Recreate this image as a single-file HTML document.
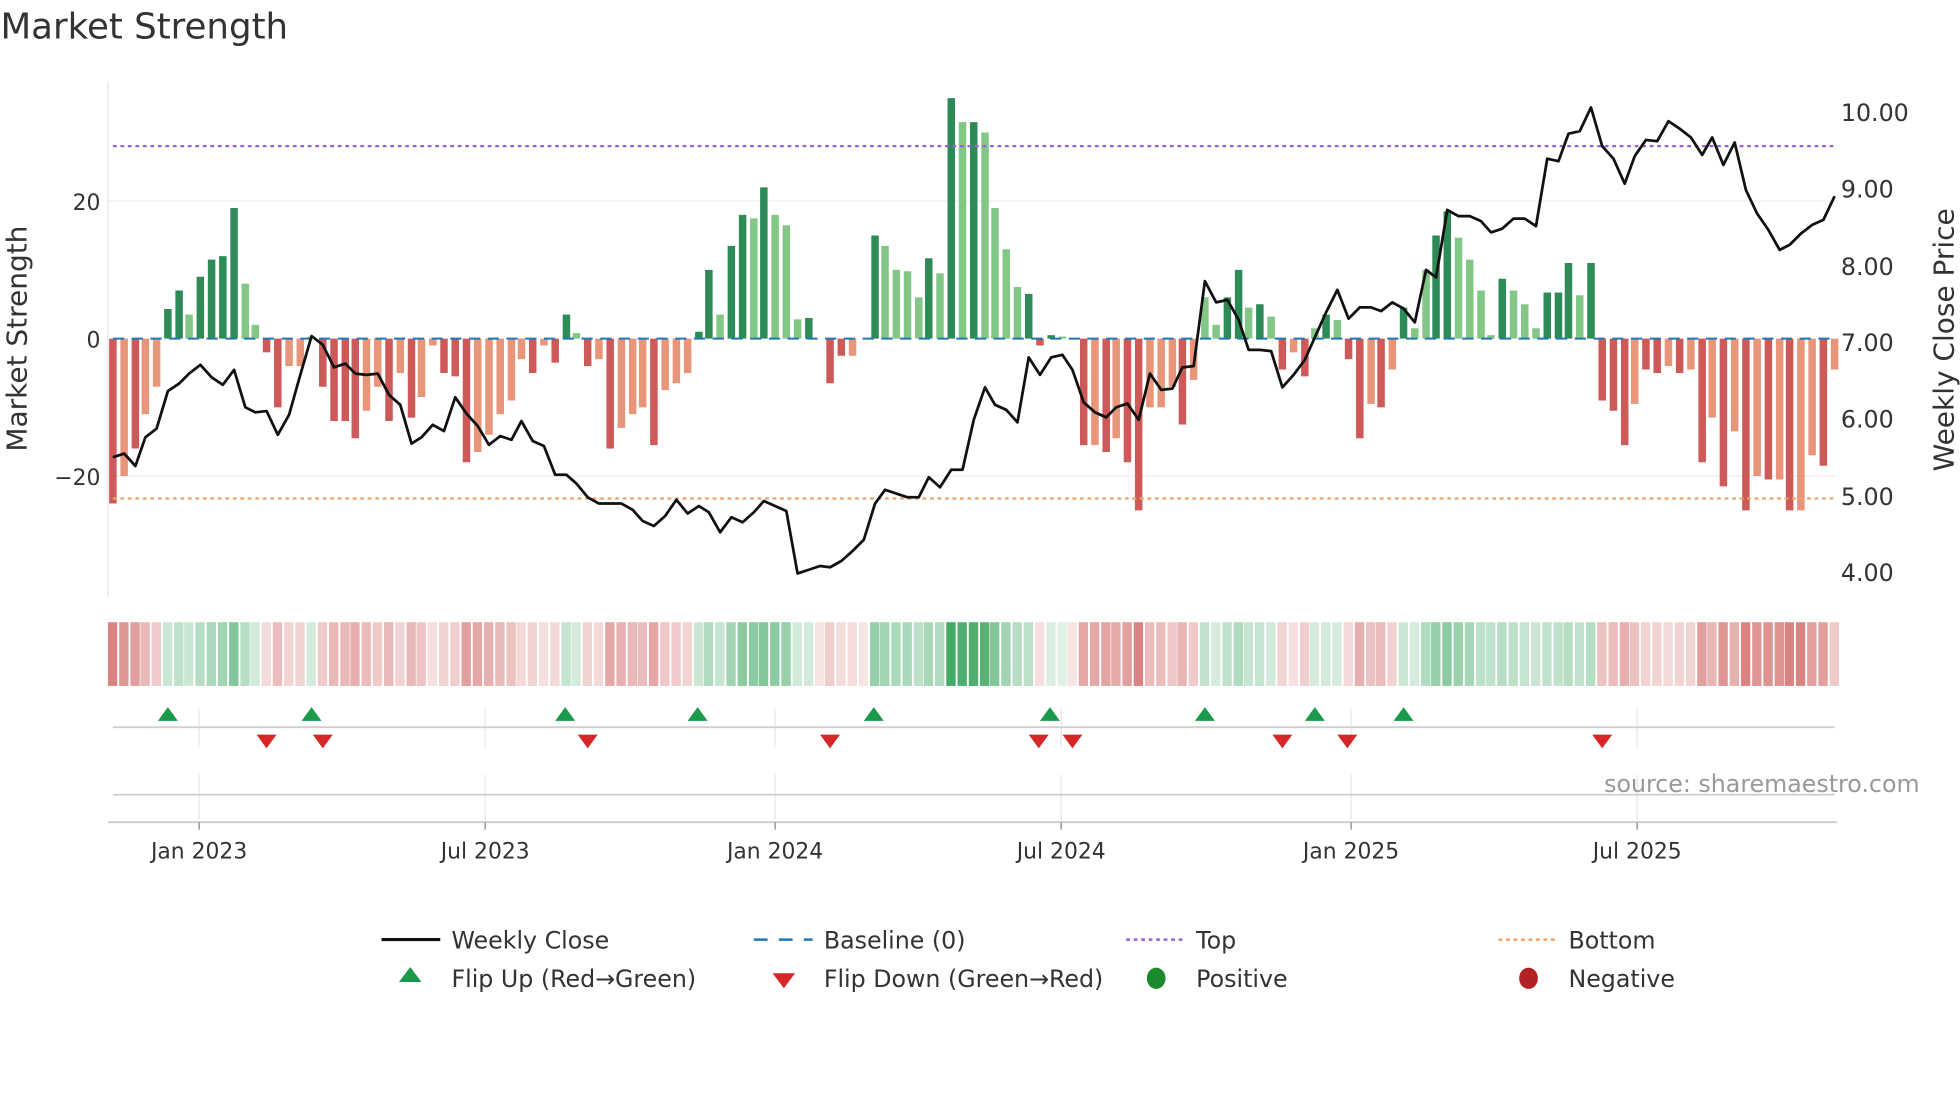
<!DOCTYPE html>
<html><head><meta charset="utf-8"><style>
html,body{margin:0;padding:0;background:#fff;}
svg{display:block;font-family:"DejaVu Sans","Liberation Sans",sans-serif;}
.a{stroke:#cd5a58}.b{stroke:#e8957a}.c{stroke:#2e8b57}.e{stroke:#82c785}
.r{fill:#c9504d}.g{fill:#2ea055}
</style></head><body>
<svg width="1960" height="1102" viewBox="0 0 1568 882" xmlns="http://www.w3.org/2000/svg">
<text x="0" y="31" font-size="28.5" fill="#333">Market Strength</text>
<line x1="86" y1="65" x2="86" y2="478" stroke="#e5e5e5"/>
<line x1="86" y1="161" x2="1470" y2="161" stroke="#eee"/>
<line x1="86" y1="381" x2="1470" y2="381" stroke="#eee"/>
<g font-size="17.5" fill="#333">
<text x="80" y="168" text-anchor="end">20</text>
<text x="80" y="278" text-anchor="end">0</text>
<text x="80" y="388" text-anchor="end">−20</text>
</g>
<g font-size="19" fill="#333">
<text x="1473" y="97">10.00</text>
<text x="1473" y="158">9.00</text>
<text x="1473" y="220">8.00</text>
<text x="1473" y="281">7.00</text>
<text x="1473" y="342">6.00</text>
<text x="1473" y="404">5.00</text>
<text x="1473" y="465">4.00</text>
</g>
<text transform="translate(21,271) rotate(-90)" font-size="22.4" fill="#333" text-anchor="middle">Market Strength</text>
<text transform="translate(1563,272) rotate(-90)" font-size="22.4" fill="#333" text-anchor="middle">Weekly Close Price</text>
<g transform="translate(0,271) scale(1,-5.5)" stroke-width="6">
<line class="a" x1="90" x2="90" y2="-24"/><line class="b" x1="99" x2="99" y2="-20"/><line class="a" x1="108" x2="108" y2="-16"/><line class="b" x1="116" x2="116" y2="-11"/><line class="b" x1="125" x2="125" y2="-7"/>
<line class="c" x1="134" x2="134" y2="4.3"/><line class="c" x1="143" x2="143" y2="7"/><line class="e" x1="151" x2="151" y2="3.5"/><line class="c" x1="160" x2="160" y2="9"/><line class="c" x1="169" x2="169" y2="11.5"/><line class="c" x1="178" x2="178" y2="12"/><line class="c" x1="187" x2="187" y2="19"/><line class="e" x1="196" x2="196" y2="8"/><line class="e" x1="204" x2="204" y2="2"/>
<line class="a" x1="213" x2="213" y2="-2"/><line class="a" x1="222" x2="222" y2="-10"/><line class="b" x1="231" x2="231" y2="-4"/><line class="b" x1="240" x2="240" y2="-4"/><line class="e" x1="249" x2="249" y2="0.3"/>
<line class="a" x1="258" x2="258" y2="-7"/><line class="a" x1="267" x2="267" y2="-12"/><line class="a" x1="276" x2="276" y2="-12"/><line class="a" x1="284" x2="284" y2="-14.5"/><line class="b" x1="293" x2="293" y2="-10.5"/><line class="b" x1="302" x2="302" y2="-7"/><line class="a" x1="311" x2="311" y2="-12"/><line class="b" x1="320" x2="320" y2="-5"/><line class="a" x1="329" x2="329" y2="-11.5"/><line class="b" x1="337" x2="337" y2="-8.5"/><line class="b" x1="346" x2="346" y2="-1"/><line class="a" x1="355" x2="355" y2="-5"/><line class="a" x1="364" x2="364" y2="-5.5"/><line class="a" x1="373" x2="373" y2="-18"/><line class="b" x1="382" x2="382" y2="-16.5"/><line class="b" x1="391" x2="391" y2="-14"/><line class="b" x1="400" x2="400" y2="-11"/><line class="b" x1="409" x2="409" y2="-9"/><line class="b" x1="417" x2="417" y2="-3"/><line class="a" x1="426" x2="426" y2="-5"/><line class="b" x1="435" x2="435" y2="-1"/><line class="a" x1="444" x2="444" y2="-3.5"/>
<line class="c" x1="453" x2="453" y2="3.5"/><line class="e" x1="461" x2="461" y2="0.8"/>
<line class="a" x1="470" x2="470" y2="-4"/><line class="b" x1="479" x2="479" y2="-3"/><line class="a" x1="488" x2="488" y2="-16"/><line class="b" x1="497" x2="497" y2="-13"/><line class="b" x1="506" x2="506" y2="-11"/><line class="b" x1="514" x2="514" y2="-10"/><line class="a" x1="523" x2="523" y2="-15.5"/><line class="b" x1="532" x2="532" y2="-7.5"/><line class="b" x1="541" x2="541" y2="-6.5"/><line class="b" x1="550" x2="550" y2="-5"/>
<line class="c" x1="559" x2="559" y2="1"/><line class="c" x1="567" x2="567" y2="10"/><line class="e" x1="576" x2="576" y2="3.5"/><line class="c" x1="585" x2="585" y2="13.5"/><line class="c" x1="594" x2="594" y2="18"/><line class="e" x1="603" x2="603" y2="17.5"/><line class="c" x1="611" x2="611" y2="22"/><line class="e" x1="620" x2="620" y2="18"/><line class="e" x1="629" x2="629" y2="16.5"/><line class="e" x1="638" x2="638" y2="2.8"/><line class="c" x1="647" x2="647" y2="3"/>
<line class="a" x1="664" x2="664" y2="-6.5"/><line class="a" x1="673" x2="673" y2="-2.5"/><line class="b" x1="682" x2="682" y2="-2.5"/>
<line class="c" x1="700" x2="700" y2="15"/><line class="e" x1="708" x2="708" y2="13.5"/><line class="e" x1="717" x2="717" y2="10"/><line class="e" x1="726" x2="726" y2="9.8"/><line class="e" x1="735" x2="735" y2="6"/><line class="c" x1="743" x2="743" y2="11.7"/><line class="e" x1="752" x2="752" y2="9.5"/><line class="c" x1="761" x2="761" y2="35"/><line class="e" x1="770" x2="770" y2="31.5"/><line class="c" x1="779" x2="779" y2="31.5"/><line class="e" x1="788" x2="788" y2="30"/><line class="e" x1="796" x2="796" y2="19"/><line class="e" x1="805" x2="805" y2="13"/><line class="e" x1="814" x2="814" y2="7.5"/><line class="c" x1="823" x2="823" y2="6.5"/>
<line class="a" x1="832" x2="832" y2="-1"/><line class="c" x1="841" x2="841" y2="0.5"/><line class="e" x1="850" x2="850" y2="0.3"/>
<line class="a" x1="867" x2="867" y2="-15.5"/><line class="b" x1="876" x2="876" y2="-15.5"/><line class="a" x1="885" x2="885" y2="-16.5"/><line class="b" x1="893" x2="893" y2="-14.5"/><line class="a" x1="902" x2="902" y2="-18"/><line class="a" x1="911" x2="911" y2="-25"/><line class="b" x1="920" x2="920" y2="-10"/><line class="b" x1="929" x2="929" y2="-10"/><line class="b" x1="938" x2="938" y2="-7"/><line class="a" x1="946" x2="946" y2="-12.5"/><line class="b" x1="955" x2="955" y2="-6"/>
<line class="e" x1="964" x2="964" y2="6"/><line class="e" x1="973" x2="973" y2="2"/><line class="c" x1="982" x2="982" y2="6"/><line class="c" x1="991" x2="991" y2="10"/><line class="e" x1="999" x2="999" y2="4.5"/><line class="c" x1="1008" x2="1008" y2="5"/><line class="e" x1="1017" x2="1017" y2="3.2"/>
<line class="a" x1="1026" x2="1026" y2="-4.5"/><line class="b" x1="1035" x2="1035" y2="-2"/><line class="a" x1="1044" x2="1044" y2="-5.5"/>
<line class="e" x1="1052" x2="1052" y2="1.5"/><line class="c" x1="1061" x2="1061" y2="3.5"/><line class="e" x1="1070" x2="1070" y2="2.7"/>
<line class="a" x1="1079" x2="1079" y2="-3"/><line class="a" x1="1088" x2="1088" y2="-14.5"/><line class="b" x1="1097" x2="1097" y2="-9.5"/><line class="a" x1="1105" x2="1105" y2="-10"/><line class="b" x1="1114" x2="1114" y2="-4.5"/>
<line class="c" x1="1123" x2="1123" y2="4.5"/><line class="e" x1="1132" x2="1132" y2="1.5"/><line class="e" x1="1141" x2="1141" y2="10"/><line class="c" x1="1149" x2="1149" y2="15"/><line class="c" x1="1158" x2="1158" y2="18.5"/><line class="e" x1="1167" x2="1167" y2="14.7"/><line class="e" x1="1176" x2="1176" y2="11.5"/><line class="e" x1="1185" x2="1185" y2="7"/><line class="e" x1="1193" x2="1193" y2="0.5"/><line class="c" x1="1202" x2="1202" y2="8.7"/><line class="e" x1="1211" x2="1211" y2="7"/><line class="e" x1="1220" x2="1220" y2="5"/><line class="e" x1="1229" x2="1229" y2="1.5"/><line class="c" x1="1238" x2="1238" y2="6.7"/><line class="c" x1="1247" x2="1247" y2="6.7"/><line class="c" x1="1255" x2="1255" y2="11"/><line class="e" x1="1264" x2="1264" y2="6.3"/><line class="c" x1="1273" x2="1273" y2="11"/>
<line class="a" x1="1282" x2="1282" y2="-9"/><line class="a" x1="1291" x2="1291" y2="-10.5"/><line class="a" x1="1300" x2="1300" y2="-15.5"/><line class="b" x1="1308" x2="1308" y2="-9.5"/><line class="a" x1="1317" x2="1317" y2="-4.5"/><line class="a" x1="1326" x2="1326" y2="-5"/><line class="b" x1="1335" x2="1335" y2="-4"/><line class="a" x1="1344" x2="1344" y2="-5"/><line class="b" x1="1353" x2="1353" y2="-4.5"/><line class="a" x1="1362" x2="1362" y2="-18"/><line class="b" x1="1370" x2="1370" y2="-11.5"/><line class="a" x1="1379" x2="1379" y2="-21.5"/><line class="b" x1="1388" x2="1388" y2="-13.5"/><line class="a" x1="1397" x2="1397" y2="-25"/><line class="b" x1="1406" x2="1406" y2="-20"/><line class="a" x1="1415" x2="1415" y2="-20.5"/><line class="b" x1="1424" x2="1424" y2="-20.5"/><line class="a" x1="1432" x2="1432" y2="-25"/><line class="b" x1="1441" x2="1441" y2="-25"/><line class="b" x1="1450" x2="1450" y2="-17"/><line class="a" x1="1459" x2="1459" y2="-18.5"/><line class="b" x1="1468" x2="1468" y2="-4.5"/>
</g>
<line x1="90" y1="271" x2="1468" y2="271" stroke="#1f77b4" stroke-width="1.6" stroke-dasharray="9,6"/>
<line x1="90" y1="117" x2="1468" y2="117" stroke="#9b5fe0" stroke-width="1.8" stroke-dasharray="3,3"/>
<line x1="90" y1="399" x2="1468" y2="399" stroke="#f4a060" stroke-width="1.8" stroke-dasharray="3,3"/>
<polyline fill="none" stroke="#111" stroke-width="2.2" stroke-linejoin="round" points="90,366 99,363 108,373 116,350 125,343 134,313 143,307 151,299 160,292 169,302 178,308 187,296 196,326 204,330 213,329 222,348 231,332 240,300 249,269 258,276 267,294 276,291 284,299 293,300 302,299 311,316 320,324 329,355 337,350 346,340 355,345 364,318 373,331 382,341 391,356 400,349 409,352 417,337 426,353 435,357 444,380 453,380 461,387 470,398 479,403 488,403 497,403 506,408 514,417 523,421 532,413 541,400 550,411 559,405 567,410 576,426 585,414 594,418 603,410 611,401 620,405 629,409 638,459 647,456 656,453 664,454 673,449 682,441 691,432 700,403 708,392 717,395 726,398 735,398 743,382 752,390 761,376 770,376 779,336 788,310 796,324 805,328 814,338 823,286 832,300 841,286 850,284 858,296 867,322 876,330 885,334 893,326 902,323 911,336 920,299 929,312 938,311 946,294 955,293 964,225 973,242 982,240 991,256 999,280 1008,280 1017,281 1026,310 1035,300 1044,288 1052,270 1061,250 1070,232 1079,255 1088,246 1097,246 1105,249 1114,242 1123,247 1132,258 1141,216 1149,222 1158,168 1167,173 1176,173 1185,177 1193,186 1202,183 1211,175 1220,175 1229,181 1238,127 1247,129 1255,107 1264,105 1273,86 1282,117 1291,127 1300,147 1308,125 1317,112 1326,113 1335,97 1344,103 1353,110 1362,124 1370,110 1379,132 1388,114 1397,152 1406,171 1415,184 1424,200 1432,196 1441,187 1450,180 1459,176 1468,157"/>
<g transform="translate(0,498)">
<rect class="r" x="86" width="7.5" height="51" opacity=".7"/><rect class="r" x="95" width="7.5" height="51" opacity=".6"/><rect class="r" x="104" width="7.5" height="51" opacity=".55"/><rect class="r" x="112" width="7.5" height="51" opacity=".4"/><rect class="r" x="121" width="7.5" height="51" opacity=".3"/>
<rect class="g" x="130" width="7.5" height="51" opacity=".25"/><rect class="g" x="139" width="7.5" height="51" opacity=".3"/><rect class="g" x="147" width="7.5" height="51" opacity=".25"/><rect class="g" x="156" width="7.5" height="51" opacity=".35"/><rect class="g" x="165" width="7.5" height="51" opacity=".4"/><rect class="g" x="174" width="7.5" height="51" opacity=".45"/><rect class="g" x="183" width="7.5" height="51" opacity=".6"/><rect class="g" x="192" width="7.5" height="51" opacity=".35"/><rect class="g" x="200" width="7.5" height="51" opacity=".22"/>
<rect class="r" x="209" width="7.5" height="51" opacity=".2"/><rect class="r" x="218" width="7.5" height="51" opacity=".38"/><rect class="r" x="227" width="7.5" height="51" opacity=".25"/><rect class="r" x="236" width="7.5" height="51" opacity=".25"/><rect class="g" x="245" width="7.5" height="51" opacity=".2"/>
<rect class="r" x="254" width="7.5" height="51" opacity=".3"/><rect class="r" x="263" width="7.5" height="51" opacity=".4"/><rect class="r" x="272" width="7.5" height="51" opacity=".4"/><rect class="r" x="280" width="7.5" height="51" opacity=".45"/><rect class="r" x="289" width="7.5" height="51" opacity=".38"/><rect class="r" x="298" width="7.5" height="51" opacity=".3"/><rect class="r" x="307" width="7.5" height="51" opacity=".4"/><rect class="r" x="316" width="7.5" height="51" opacity=".25"/><rect class="r" x="325" width="7.5" height="51" opacity=".4"/><rect class="r" x="333" width="7.5" height="51" opacity=".33"/><rect class="r" x="342" width="7.5" height="51" opacity=".18"/><rect class="r" x="351" width="7.5" height="51" opacity=".25"/><rect class="r" x="360" width="7.5" height="51" opacity=".28"/><rect class="r" x="369" width="7.5" height="51" opacity=".55"/><rect class="r" x="378" width="7.5" height="51" opacity=".5"/><rect class="r" x="387" width="7.5" height="51" opacity=".45"/><rect class="r" x="396" width="7.5" height="51" opacity=".4"/><rect class="r" x="405" width="7.5" height="51" opacity=".35"/><rect class="r" x="413" width="7.5" height="51" opacity=".22"/><rect class="r" x="422" width="7.5" height="51" opacity=".25"/><rect class="r" x="431" width="7.5" height="51" opacity=".18"/><rect class="r" x="440" width="7.5" height="51" opacity=".22"/>
<rect class="g" x="449" width="7.5" height="51" opacity=".28"/><rect class="g" x="457" width="7.5" height="51" opacity=".2"/>
<rect class="r" x="466" width="7.5" height="51" opacity=".25"/><rect class="r" x="475" width="7.5" height="51" opacity=".22"/><rect class="r" x="484" width="7.5" height="51" opacity=".5"/><rect class="r" x="493" width="7.5" height="51" opacity=".45"/><rect class="r" x="502" width="7.5" height="51" opacity=".4"/><rect class="r" x="510" width="7.5" height="51" opacity=".38"/><rect class="r" x="519" width="7.5" height="51" opacity=".5"/><rect class="r" x="528" width="7.5" height="51" opacity=".32"/><rect class="r" x="537" width="7.5" height="51" opacity=".3"/><rect class="r" x="546" width="7.5" height="51" opacity=".25"/>
<rect class="g" x="555" width="7.5" height="51" opacity=".25"/><rect class="g" x="563" width="7.5" height="51" opacity=".38"/><rect class="g" x="572" width="7.5" height="51" opacity=".28"/><rect class="g" x="581" width="7.5" height="51" opacity=".45"/><rect class="g" x="590" width="7.5" height="51" opacity=".55"/><rect class="g" x="599" width="7.5" height="51" opacity=".55"/><rect class="g" x="607" width="7.5" height="51" opacity=".6"/><rect class="g" x="616" width="7.5" height="51" opacity=".55"/><rect class="g" x="625" width="7.5" height="51" opacity=".5"/><rect class="g" x="634" width="7.5" height="51" opacity=".22"/><rect class="g" x="643" width="7.5" height="51" opacity=".22"/>
<rect class="r" x="652" width="7.5" height="51" opacity=".15"/><rect class="r" x="660" width="7.5" height="51" opacity=".28"/><rect class="r" x="669" width="7.5" height="51" opacity=".2"/><rect class="r" x="678" width="7.5" height="51" opacity=".2"/><rect class="r" x="687" width="7.5" height="51" opacity=".15"/>
<rect class="g" x="696" width="7.5" height="51" opacity=".5"/><rect class="g" x="704" width="7.5" height="51" opacity=".45"/><rect class="g" x="713" width="7.5" height="51" opacity=".4"/><rect class="g" x="722" width="7.5" height="51" opacity=".4"/><rect class="g" x="731" width="7.5" height="51" opacity=".32"/><rect class="g" x="739" width="7.5" height="51" opacity=".42"/><rect class="g" x="748" width="7.5" height="51" opacity=".38"/><rect class="g" x="757" width="7.5" height="51" opacity=".9"/><rect class="g" x="766" width="7.5" height="51" opacity=".85"/><rect class="g" x="775" width="7.5" height="51" opacity=".85"/><rect class="g" x="784" width="7.5" height="51" opacity=".8"/><rect class="g" x="792" width="7.5" height="51" opacity=".6"/><rect class="g" x="801" width="7.5" height="51" opacity=".45"/><rect class="g" x="810" width="7.5" height="51" opacity=".35"/><rect class="g" x="819" width="7.5" height="51" opacity=".32"/>
<rect class="r" x="828" width="7.5" height="51" opacity=".18"/><rect class="g" x="837" width="7.5" height="51" opacity=".18"/><rect class="g" x="846" width="7.5" height="51" opacity=".15"/><rect class="r" x="854" width="7.5" height="51" opacity=".15"/>
<rect class="r" x="863" width="7.5" height="51" opacity=".5"/><rect class="r" x="872" width="7.5" height="51" opacity=".5"/><rect class="r" x="881" width="7.5" height="51" opacity=".52"/><rect class="r" x="889" width="7.5" height="51" opacity=".48"/><rect class="r" x="898" width="7.5" height="51" opacity=".55"/><rect class="r" x="907" width="7.5" height="51" opacity=".7"/><rect class="r" x="916" width="7.5" height="51" opacity=".38"/><rect class="r" x="925" width="7.5" height="51" opacity=".38"/><rect class="r" x="934" width="7.5" height="51" opacity=".32"/><rect class="r" x="942" width="7.5" height="51" opacity=".42"/><rect class="r" x="951" width="7.5" height="51" opacity=".3"/>
<rect class="g" x="960" width="7.5" height="51" opacity=".3"/><rect class="g" x="969" width="7.5" height="51" opacity=".2"/><rect class="g" x="978" width="7.5" height="51" opacity=".3"/><rect class="g" x="987" width="7.5" height="51" opacity=".38"/><rect class="g" x="995" width="7.5" height="51" opacity=".28"/><rect class="g" x="1004" width="7.5" height="51" opacity=".28"/><rect class="g" x="1013" width="7.5" height="51" opacity=".22"/>
<rect class="r" x="1022" width="7.5" height="51" opacity=".25"/><rect class="r" x="1031" width="7.5" height="51" opacity=".18"/><rect class="r" x="1040" width="7.5" height="51" opacity=".28"/>
<rect class="g" x="1048" width="7.5" height="51" opacity=".2"/><rect class="g" x="1057" width="7.5" height="51" opacity=".22"/><rect class="g" x="1066" width="7.5" height="51" opacity=".2"/>
<rect class="r" x="1075" width="7.5" height="51" opacity=".22"/><rect class="r" x="1084" width="7.5" height="51" opacity=".45"/><rect class="r" x="1093" width="7.5" height="51" opacity=".35"/><rect class="r" x="1101" width="7.5" height="51" opacity=".38"/><rect class="r" x="1110" width="7.5" height="51" opacity=".25"/>
<rect class="g" x="1119" width="7.5" height="51" opacity=".25"/><rect class="g" x="1128" width="7.5" height="51" opacity=".2"/><rect class="g" x="1137" width="7.5" height="51" opacity=".38"/><rect class="g" x="1145" width="7.5" height="51" opacity=".5"/><rect class="g" x="1154" width="7.5" height="51" opacity=".55"/><rect class="g" x="1163" width="7.5" height="51" opacity=".48"/><rect class="g" x="1172" width="7.5" height="51" opacity=".42"/><rect class="g" x="1181" width="7.5" height="51" opacity=".32"/><rect class="g" x="1189" width="7.5" height="51" opacity=".3"/><rect class="g" x="1198" width="7.5" height="51" opacity=".35"/><rect class="g" x="1207" width="7.5" height="51" opacity=".32"/><rect class="g" x="1216" width="7.5" height="51" opacity=".28"/><rect class="g" x="1225" width="7.5" height="51" opacity=".25"/><rect class="g" x="1234" width="7.5" height="51" opacity=".3"/><rect class="g" x="1243" width="7.5" height="51" opacity=".3"/><rect class="g" x="1251" width="7.5" height="51" opacity=".35"/><rect class="g" x="1260" width="7.5" height="51" opacity=".3"/><rect class="g" x="1269" width="7.5" height="51" opacity=".35"/>
<rect class="r" x="1278" width="7.5" height="51" opacity=".35"/><rect class="r" x="1287" width="7.5" height="51" opacity=".38"/><rect class="r" x="1296" width="7.5" height="51" opacity=".45"/><rect class="r" x="1304" width="7.5" height="51" opacity=".35"/><rect class="r" x="1313" width="7.5" height="51" opacity=".25"/><rect class="r" x="1322" width="7.5" height="51" opacity=".25"/><rect class="r" x="1331" width="7.5" height="51" opacity=".22"/><rect class="r" x="1340" width="7.5" height="51" opacity=".25"/><rect class="r" x="1349" width="7.5" height="51" opacity=".25"/><rect class="r" x="1358" width="7.5" height="51" opacity=".55"/><rect class="r" x="1366" width="7.5" height="51" opacity=".42"/><rect class="r" x="1375" width="7.5" height="51" opacity=".6"/><rect class="r" x="1384" width="7.5" height="51" opacity=".45"/><rect class="r" x="1393" width="7.5" height="51" opacity=".7"/><rect class="r" x="1402" width="7.5" height="51" opacity=".6"/><rect class="r" x="1411" width="7.5" height="51" opacity=".62"/><rect class="r" x="1420" width="7.5" height="51" opacity=".62"/><rect class="r" x="1428" width="7.5" height="51" opacity=".7"/><rect class="r" x="1437" width="7.5" height="51" opacity=".7"/><rect class="r" x="1446" width="7.5" height="51" opacity=".55"/><rect class="r" x="1455" width="7.5" height="51" opacity=".55"/><rect class="r" x="1464" width="7.5" height="51" opacity=".3"/>
</g>
<g stroke="#e6e6ea" stroke-width="1">
<line x1="159" y1="567" x2="159" y2="598"/><line x1="388" y1="567" x2="388" y2="598"/><line x1="620" y1="567" x2="620" y2="598"/><line x1="849" y1="567" x2="849" y2="598"/><line x1="1081" y1="567" x2="1081" y2="598"/><line x1="1310" y1="567" x2="1310" y2="598"/>
<line x1="159" y1="620" x2="159" y2="656"/><line x1="388" y1="620" x2="388" y2="656"/><line x1="620" y1="620" x2="620" y2="656"/><line x1="849" y1="620" x2="849" y2="656"/><line x1="1081" y1="620" x2="1081" y2="656"/><line x1="1310" y1="620" x2="1310" y2="656"/>
</g>
<line x1="90" y1="582" x2="1468" y2="582" stroke="#d0d0d0" stroke-width="1.5"/>
<line x1="90" y1="636" x2="1468" y2="636" stroke="#d0d0d0" stroke-width="1.5"/>
<line x1="86" y1="658" x2="1470" y2="658" stroke="#ccc" stroke-width="1.5"/>
<g stroke="#999" stroke-width="1.2"><line x1="159" y1="658" x2="159" y2="664"/><line x1="388" y1="658" x2="388" y2="664"/><line x1="620" y1="658" x2="620" y2="664"/><line x1="849" y1="658" x2="849" y2="664"/><line x1="1081" y1="658" x2="1081" y2="664"/><line x1="1310" y1="658" x2="1310" y2="664"/></g>
<g fill="#1a9a4a">
<path d="M134,566l-8,11h16z"/><path d="M249,566l-8,11h16z"/><path d="M452,566l-8,11h16z"/><path d="M558,566l-8,11h16z"/><path d="M699,566l-8,11h16z"/><path d="M840,566l-8,11h16z"/><path d="M964,566l-8,11h16z"/><path d="M1052,566l-8,11h16z"/><path d="M1123,566l-8,11h16z"/>
</g>
<g fill="#d62728">
<path d="M213,599l-8,-11h16z"/><path d="M258,599l-8,-11h16z"/><path d="M470,599l-8,-11h16z"/><path d="M664,599l-8,-11h16z"/><path d="M831,599l-8,-11h16z"/><path d="M858,599l-8,-11h16z"/><path d="M1026,599l-8,-11h16z"/><path d="M1078,599l-8,-11h16z"/><path d="M1282,599l-8,-11h16z"/>
</g>
<text x="1536" y="634" font-size="19" fill="#999" text-anchor="end">source: sharemaestro.com</text>
<g font-size="17.5" fill="#333" text-anchor="middle">
<text x="159" y="687">Jan 2023</text><text x="388" y="687">Jul 2023</text><text x="620" y="687">Jan 2024</text><text x="849" y="687">Jul 2024</text><text x="1081" y="687">Jan 2025</text><text x="1310" y="687">Jul 2025</text>
</g>
<g font-size="19" fill="#333">
<line x1="305" y1="752" x2="352" y2="752" stroke="#111" stroke-width="2.5"/>
<text x="361" y="759">Weekly Close</text>
<line x1="603" y1="752" x2="650" y2="752" stroke="#1f77b4" stroke-width="2" stroke-dasharray="11,9"/>
<text x="659" y="759">Baseline (0)</text>
<line x1="901" y1="752" x2="946" y2="752" stroke="#9b5fe0" stroke-width="2" stroke-dasharray="3,3"/>
<text x="957" y="759">Top</text>
<line x1="1199" y1="752" x2="1244" y2="752" stroke="#f4a060" stroke-width="2" stroke-dasharray="3,3"/>
<text x="1255" y="759">Bottom</text>
<path d="M328,774l-9,12h18z" fill="#1a9a4a"/>
<text x="361" y="790">Flip Up (Red→Green)</text>
<path d="M627,791l-9,-12h18z" fill="#d62728"/>
<text x="659" y="790">Flip Down (Green→Red)</text>
<ellipse cx="925" cy="783" rx="7.5" ry="8.5" fill="#1e8a2e"/>
<text x="957" y="790">Positive</text>
<ellipse cx="1223" cy="783" rx="7.5" ry="8.5" fill="#b22222"/>
<text x="1255" y="790">Negative</text>
</g>
</svg>
</body></html>
